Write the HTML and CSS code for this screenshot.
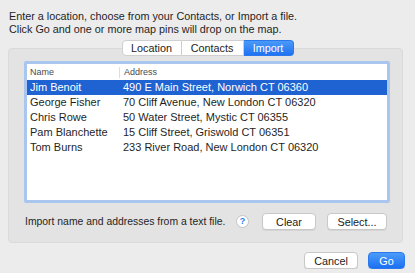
FILE: index.html
```html
<!DOCTYPE html>
<html>
<head>
    <link rel="stylesheet" href="styles.css">
    <title>Import</title>
</head>
<body>
    <div class="intro">
        Enter a location, choose from your Contacts, or Import a file.<br>
        Click Go and one or more map pins will drop on the map.
    </div>

    <div class="tabs">
        <span class="tab">Location</span>
        <span class="tab">Contacts</span>
        <span class="tab active">Import</span>
    </div>

    <div class="group">
        <div class="table">
            <div class="row head">
                <span class="name">Name</span>
                <span class="addr">Address</span>
            </div>
            <div class="row selected">
                <span class="name">Jim Benoit</span>
                <span class="addr">490 E Main Street, Norwich CT 06360</span>
            </div>
            <div class="row">
                <span class="name">George Fisher</span>
                <span class="addr">70 Cliff Avenue, New London CT 06320</span>
            </div>
            <div class="row">
                <span class="name">Chris Rowe</span>
                <span class="addr">50 Water Street, Mystic CT 06355</span>
            </div>
            <div class="row">
                <span class="name">Pam Blanchette</span>
                <span class="addr">15 Cliff Street, Griswold CT 06351</span>
            </div>
            <div class="row">
                <span class="name">Tom Burns</span>
                <span class="addr">233 River Road, New London CT 06320</span>
            </div>
        </div>

        <div class="actions">
            <span class="hint">Import name and addresses from a text file.</span>
            <button class="help">?</button>
            <button class="btn clear">Clear</button>
            <button class="btn select">Select...</button>
        </div>
    </div>

    <div class="footer">
        <button class="btn cancel">Cancel</button>
        <button class="btn primary">Go</button>
    </div>
</body>
</html>
```

FILE: styles.css
```css
body {
    margin: 0;
    background: #ececec;
    font-family: "Liberation Sans", Arial, sans-serif;
    font-size: 10.8px;
    color: #1f1f1f;
}

.intro {
    padding: 10px 0 0 9px;
    line-height: 13px;
}

.tabs {
    display: flex;
    justify-content: center;
    margin-top: 4px;
    margin-bottom: -8px;
    position: relative;
    z-index: 1;
}

.tab {
    height: 14px;
    line-height: 14px;
    background: #fff;
    border: 1px solid #cfcfcf;
    border-left: none;
    text-align: center;
    color: #222;
}

.tab:first-child {
    width: 58px;
    border-left: 1px solid #cfcfcf;
    border-radius: 4px 0 0 4px;
}

.tab:nth-child(2) {
    width: 61px;
}

.tab.active {
    width: 49px;
    background: linear-gradient(#4a9af8, #1f73f1);
    border-color: #2a78ee;
    color: #fff;
    border-radius: 0 4px 4px 0;
}

.group {
    margin: 0 12px 0 8px;
    padding: 12px 12px 12px 15px;
    background: #e3e3e3;
    border: 1px solid #dadada;
    border-radius: 4px;
}

.table {
    height: 136px;
    background: #fff;
    border: 3px solid #a9c6ee;
    border-radius: 2px;
}

.row {
    display: grid;
    grid-template-columns: 92px 1fr;
    height: 15px;
    line-height: 15px;
    font-size: 11px;
}

.row .name {
    padding-left: 3px;
}

.row .addr {
    padding-left: 4px;
}

.row.head {
    height: 16px;
    line-height: 16px;
    font-size: 9px;
    color: #4a4a4a;
}

.row.head .addr {
    border-left: 1px solid #dedede;
    margin: 3px 0 2px;
    line-height: 11px;
}

.row.selected {
    background: #1f62d1;
    color: #fff;
}

.actions {
    display: flex;
    align-items: center;
    margin-top: 10px;
    padding: 0 3px 0 1px;
}

.hint {
    white-space: nowrap;
    font-size: 10.4px;
}

button {
    font-family: inherit;
    font-size: 10.8px;
    margin: 0;
    cursor: default;
}

.help {
    flex: none;
    width: 13px;
    height: 13px;
    padding: 0;
    margin-left: auto;
    margin-right: 13px;
    border-radius: 50%;
    background: #fff;
    border: 1px solid #c4c4c4;
    color: #2b7bf0;
    font-weight: bold;
    font-size: 9px;
    line-height: 11px;
}

.btn {
    flex: none;
    height: 17px;
    padding: 0;
    background: #fff;
    border: 1px solid #c8c8c8;
    border-radius: 4px;
    color: #222;
    box-shadow: 0 1px 0 #d4d4d4;
}

.clear {
    width: 54px;
    margin-right: 11px;
}

.select {
    width: 60px;
}

.footer {
    display: flex;
    justify-content: flex-end;
    gap: 10px;
    padding: 9px 10px 0 0;
}

.cancel {
    width: 54px;
}

.btn.primary {
    width: 37px;
    background: linear-gradient(#4b9bf9, #1c70f1);
    border-color: #2a78ee;
    color: #fff;
}
```
